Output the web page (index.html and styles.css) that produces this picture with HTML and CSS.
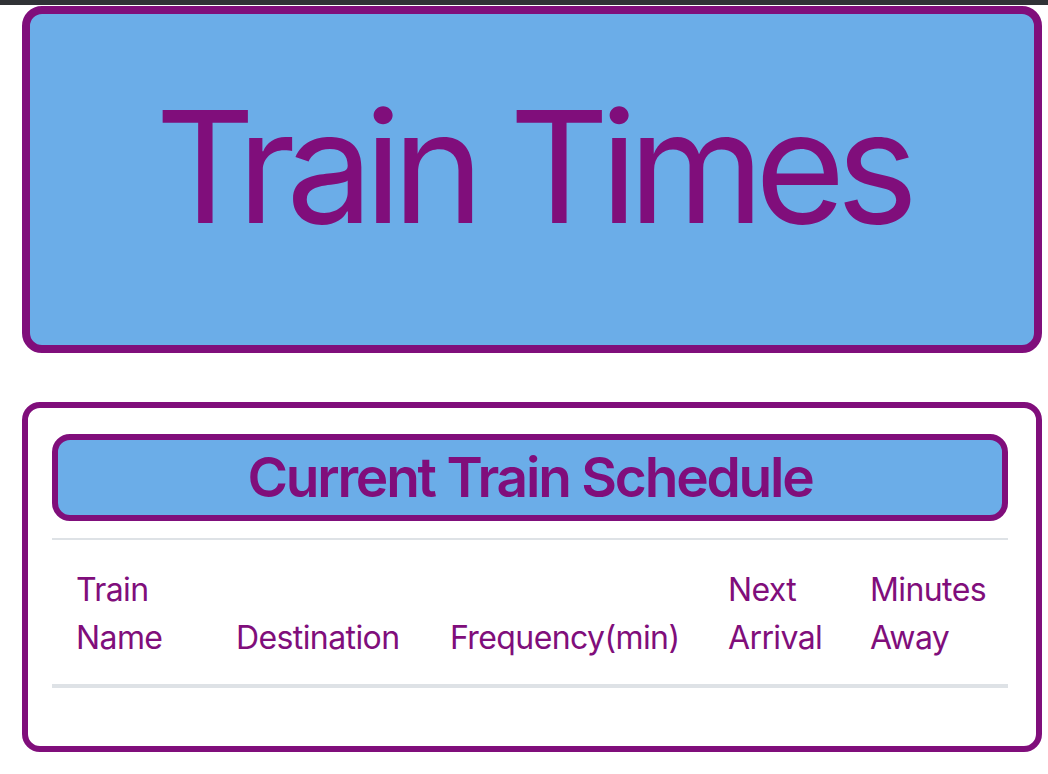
FILE: index.html
```html
<!DOCTYPE html>
<html lang="en">
<head>
<meta charset="utf-8">
<title>Train Times</title>
<link rel="stylesheet" href="styles.css">
</head>
<body>
<div class="topbar"></div>
<main class="page">
  <header class="jumbo">
    <h1 class="jumbo-title">Train Times</h1>
  </header>
  <section class="panel">
    <h2 class="panel-title">Current Train Schedule</h2>
    <table class="schedule">
      <colgroup>
        <col class="c1"><col class="c2"><col class="c3"><col class="c4"><col class="c5">
      </colgroup>
      <thead>
        <tr>
          <th>Train Name</th>
          <th>Destination</th>
          <th>Frequency(min)</th>
          <th>Next Arrival</th>
          <th>Minutes Away</th>
        </tr>
      </thead>
      <tbody></tbody>
    </table>
  </section>
</main>
</body>
</html>
```
FILE: styles.css
```css
* { box-sizing: border-box; }
html, body { margin: 0; padding: 0; background: #fff; }
body {
  font-family: Inter, "Noto Sans", "Liberation Sans", sans-serif;
  color: #800e7b;
}
.topbar { height: 5px; background: #303236; }
.page {
  padding: 1px 6px 0 22px;
  display: flex;
  flex-direction: column;
  gap: 49px;
}
.jumbo {
  height: 347px;
  background: #6badE8;
  border: 8px solid #800e7b;
  border-radius: 20px;
  padding-top: 60px;
  text-align: center;
}
.jumbo-title {
  margin: 0;
  font-size: 155px;
  line-height: 186px;
  font-weight: 400;
  letter-spacing: -9.2px;
}
.panel {
  border: 6px solid #800e7b;
  border-radius: 18px;
  padding: 26px 28px 58px 24px;
}
.panel-title {
  margin: 0 0 17px;
  height: 87px;
  background: #6badE8;
  border: 6px solid #800e7b;
  border-radius: 18px;
  text-align: center;
  font-size: 55px;
  font-weight: 600;
  line-height: 75px;
  letter-spacing: -2.2px;
}
.schedule {
  width: 100%;
  border-collapse: collapse;
  table-layout: fixed;
}
.c1 { width: 160px; }
.c2 { width: 214px; }
.c3 { width: 278px; }
.c4 { width: 142px; }
.c5 { width: 162px; }
.schedule th {
  text-align: left;
  font-weight: 400;
  font-size: 32px;
  line-height: 48px;
  letter-spacing: -0.6px;
  padding: 26px 0 22px 24px;
  vertical-align: bottom;
  border-top: 2px solid #dee2e6;
  border-bottom: 4px solid #dee2e6;
  white-space: normal;
}
```
